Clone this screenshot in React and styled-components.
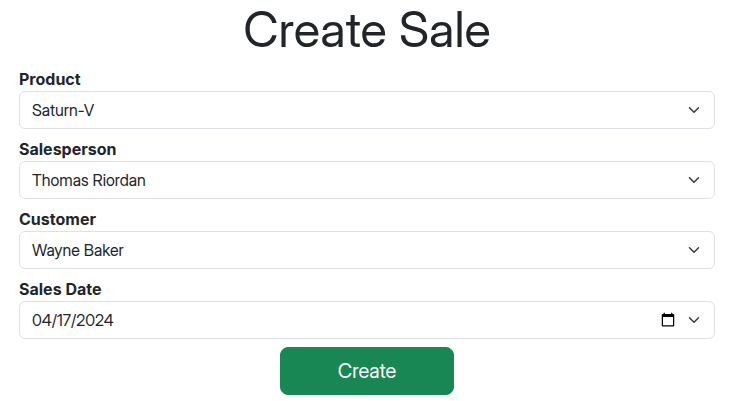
import React, { useState } from "react";
import styled, { createGlobalStyle, css } from "styled-components";

const GlobalStyle = createGlobalStyle`
  *, *::before, *::after { box-sizing: border-box; }
  body {
    margin: 0;
    background: #fff;
    color: #212529;
    font-family: Inter, "Liberation Sans", sans-serif;
    font-size: 16px;
    line-height: 24px;
  }
`;

const displayFont = `"Inter Display", Inter, sans-serif`;

const Page = styled.main`
  padding: 0 23px 0 19px;
`;

const Title = styled.h1`
  margin: 0 0 7px;
  font-family: ${displayFont};
  font-size: 49px;
  font-weight: 400;
  line-height: 60px;
  text-align: center;
`;

const Form = styled.form`
  display: flex;
  flex-direction: column;
  gap: 8px;
`;

const Field = styled.div`
  display: flex;
  flex-direction: column;
`;

const Label = styled.label`
  font-weight: 700;
  line-height: 24px;
`;

const ControlBox = styled.div`
  display: grid;
  align-items: center;
`;

const controlStyle = css`
  grid-area: 1 / 1;
  width: 100%;
  height: 38px;
  margin: 0;
  padding: 6px 36px 6px 12px;
  border: 1px solid #dee2e6;
  border-radius: 6px;
  background: #fff;
  color: inherit;
  font: inherit;
  font-family: ${displayFont};
  appearance: none;
`;

const Select = styled.select`${controlStyle}`;

const DateInput = styled.input`
  ${controlStyle}
  &::-webkit-datetime-edit { padding: 0; }
  &::-webkit-datetime-edit-fields-wrapper { padding: 0; }
  &::-webkit-datetime-edit-month-field,
  &::-webkit-datetime-edit-day-field,
  &::-webkit-datetime-edit-year-field { padding: 0; }
`;

const Chevron = styled.svg`
  grid-area: 1 / 1;
  justify-self: end;
  width: 16px;
  height: 12px;
  margin-right: 13px;
  pointer-events: none;
`;

const SubmitButton = styled.button`
  align-self: center;
  width: 25%;
  padding: 8px 16px;
  border: 1px solid #198754;
  border-radius: 8px;
  background: #198754;
  color: #fff;
  font: inherit;
  font-family: ${displayFont};
  font-size: 20px;
  line-height: 30px;
  cursor: pointer;
`;

function Control({ children }) {
  return (
    <ControlBox>
      {children}
      <Chevron viewBox="0 0 16 16" aria-hidden="true">
        <path d="m2 5 6 6 6-6" fill="none" stroke="#343a40" strokeWidth="2" strokeLinecap="round" strokeLinejoin="round" />
      </Chevron>
    </ControlBox>
  );
}

const fields = [
  { id: "product", label: "Product", value: "Saturn-V" },
  { id: "salesperson", label: "Salesperson", value: "Thomas Riordan" },
  { id: "customer", label: "Customer", value: "Wayne Baker" },
];

export default function App() {
  const [date, setDate] = useState("2024-04-17");
  return (
    <>
      <GlobalStyle />
      <Page>
        <Title>Create Sale</Title>
        <Form onSubmit={(e) => e.preventDefault()}>
          {fields.map((f) => (
            <Field key={f.id}>
              <Label htmlFor={f.id}>{f.label}</Label>
              <Control>
                <Select id={f.id} defaultValue={f.value}>
                  <option>{f.value}</option>
                </Select>
              </Control>
            </Field>
          ))}
          <Field>
            <Label htmlFor="date">Sales Date</Label>
            <Control>
              <DateInput id="date" type="date" value={date} onChange={(e) => setDate(e.target.value)} />
            </Control>
          </Field>
          <SubmitButton type="submit">Create</SubmitButton>
        </Form>
      </Page>
    </>
  );
}
